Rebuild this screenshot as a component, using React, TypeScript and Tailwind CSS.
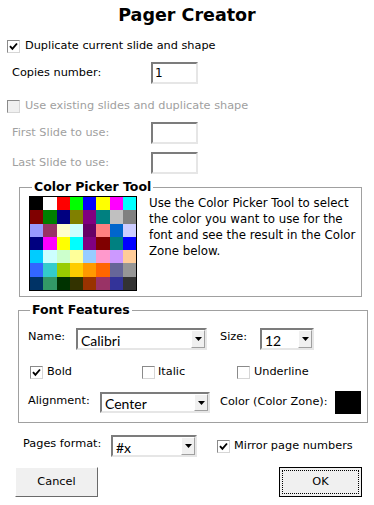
import React from "react";

const PALETTE = [
  ["#000000", "#ffffff", "#ff0000", "#00ff00", "#0000ff", "#ffff00", "#ff00ff", "#00ffff"],
  ["#800000", "#008000", "#000080", "#808000", "#800080", "#008080", "#c0c0c0", "#808080"],
  ["#9999ff", "#993366", "#ffffcc", "#ccffff", "#660066", "#ff8080", "#0066cc", "#ccccff"],
  ["#000080", "#ff00ff", "#ffff00", "#00ffff", "#800080", "#800000", "#008080", "#0000ff"],
  ["#00ccff", "#ccffff", "#ccffcc", "#ffff99", "#99ccff", "#ff99cc", "#cc99ff", "#ffcc99"],
  ["#3366ff", "#33cccc", "#99cc00", "#ffcc00", "#ff9900", "#ff6600", "#666699", "#969696"],
  ["#003366", "#339966", "#003300", "#333300", "#993300", "#993366", "#333399", "#333333"],
];

function Check({ checked, disabled }: { checked?: boolean; disabled?: boolean }) {
  return (
    <div
      className={
        "w-[13px] h-[13px] shrink-0 border border-t-[#8a8a8a] border-l-[#8a8a8a] border-r-[#d6d6d6] border-b-[#d6d6d6] flex items-center justify-center " +
        (disabled ? "bg-[#f0f0f0]" : "bg-white")
      }
    >
      {checked && (
        <svg width="9" height="9" viewBox="0 0 9 9">
          <path d="M1 4.2 L3.4 6.8 L8 1.5" fill="none" stroke="#000" strokeWidth="1.9" />
        </svg>
      )}
    </div>
  );
}

function TextBox({ value, w }: { value?: string; w: number }) {
  return (
    <div
      className="h-[22px] border-2 border-t-[#7c7c7c] border-l-[#7c7c7c] border-r-[#e6e6e6] border-b-[#e6e6e6] bg-white flex items-center pl-[2px] text-[12px] text-black font-['DejaVu_Sans',sans-serif]"
      style={{ width: w }}
    >
      {value}
    </div>
  );
}

function Combo({ value, w, h = 22 }: { value: string; w: number; h?: number }) {
  return (
    <div
      className="border-2 border-t-[#7c7c7c] border-l-[#7c7c7c] border-r-[#e6e6e6] border-b-[#e6e6e6] bg-white flex items-stretch"
      style={{ width: w, height: h }}
    >
      <div className="flex-1 flex items-center pl-[3px] pt-[2px] text-[14px] text-black font-['Lato',sans-serif]">
        {value}
      </div>
      <div className="w-[14px] bg-[#f0f0f0] border border-t-[#ffffff] border-l-[#ffffff] border-r-[#a0a0a0] border-b-[#a0a0a0] flex items-center justify-center">
        <svg width="7" height="4" viewBox="0 0 7 4">
          <path d="M0 0 H7 L3.5 4 Z" fill="#000" />
        </svg>
      </div>
    </div>
  );
}

export default function App() {
  return (
    <div className="w-[374px] h-[505px] bg-white text-black font-['DejaVu_Sans',sans-serif] text-[11.3px] flex flex-col overflow-hidden">
      <div className="h-[30px] flex items-center justify-center font-bold text-[17.5px] pt-[1px]">
        Pager Creator
      </div>

      <div className="mt-[10px] h-[13px] pl-[7px] flex items-center gap-[5px]">
        <Check checked />
        <span>Duplicate current slide and shape</span>
      </div>

      <div className="mt-[9px] h-[22px] pl-[12px] flex items-center">
        <span className="w-[139px]">Copies number:</span>
        <TextBox value="1" w={47} />
      </div>

      <div className="mt-[16px] h-[13px] pl-[7px] flex items-center gap-[5px] text-[#a0a0a0]">
        <Check disabled />
        <span>Use existing slides and duplicate shape</span>
      </div>

      <div className="mt-[9px] h-[22px] pl-[12px] flex items-center text-[#a0a0a0]">
        <span className="w-[139px]">First Slide to use:</span>
        <TextBox w={47} />
      </div>

      <div className="mt-[8px] h-[22px] pl-[12px] flex items-center text-[#a0a0a0]">
        <span className="w-[139px]">Last Slide to use:</span>
        <TextBox w={47} />
      </div>

      <div className="relative mt-[13px] ml-[19px] w-[343px] h-[110px] border border-[#a0a0a0] pt-[8px] pl-[9px] flex items-start gap-[12px]">
        <div className="absolute left-[12px] top-[-9px] bg-white px-[2px] font-bold text-[12.5px] leading-[16px]">
          Color Picker Tool
        </div>
        <div className="w-[108px] h-[95px] border border-black grid grid-cols-8 grid-rows-7 shrink-0">
          {PALETTE.flat().map((c, i) => (
            <div key={i} style={{ backgroundColor: c }} />
          ))}
        </div>
        <div className="-mt-[1px] leading-[16px] whitespace-nowrap text-[11.8px]">
          Use the Color Picker Tool to select
          <br />
          the color you want to use for the
          <br />
          font and see the result in the Color
          <br />
          Zone below.
        </div>
      </div>

      <div className="relative mt-[13px] ml-[18px] w-[350px] h-[113px] border border-[#a0a0a0] pt-[17px] pl-[9px] flex flex-col">
        <div className="absolute left-[11px] top-[-9px] bg-white px-[2px] font-bold text-[12.5px] leading-[16px]">
          Font Features
        </div>
        <div className="h-[22px] flex items-center">
          <span className="w-[48px] -mt-[4px]">Name:</span>
          <Combo value="Calibri" w={131} />
          <span className="ml-[13px] w-[40px] -mt-[4px]">Size:</span>
          <Combo value="12" w={54} />
        </div>
        <div className="mt-[16px] h-[13px] flex items-center">
          <div className="pl-[2px] w-[114px] flex items-center gap-[4px]">
            <Check checked />
            <span>Bold</span>
          </div>
          <div className="w-[95px] flex items-center gap-[3px]">
            <Check />
            <span>Italic</span>
          </div>
          <div className="flex items-center gap-[4px]">
            <Check />
            <span>Underline</span>
          </div>
        </div>
        <div className="mt-[12px] h-[23px] flex items-center">
          <span className="w-[72px] -mt-[3px]">Alignment:</span>
          <Combo value="Center" w={110} h={21} />
          <span className="ml-[10px] w-[115px]">Color (Color Zone):</span>
          <div className="w-[26px] h-[23px] bg-black" />
        </div>
      </div>

      <div className="mt-[12px] h-[22px] pl-[23px] flex items-center">
        <span className="w-[88px] -mt-[3px]">Pages format:</span>
        <Combo value="#x" w={86} />
        <div className="ml-[20px] flex items-center gap-[4px]">
          <Check checked />
          <span>Mirror page numbers</span>
        </div>
      </div>

      <div className="mt-[10px] h-[30px] px-[15px] flex items-center justify-between">
        <div className="w-[83px] h-[30px] bg-[#f0f0f0] border border-t-white border-l-white border-r-[#6a6a6a] border-b-[#6a6a6a] flex items-center justify-center">
          Cancel
        </div>
        <div className="w-[83px] h-[30px] mr-[-3px] bg-[#f0f0f0] border border-black p-[2px]">
          <div className="w-full h-full border border-dotted border-black flex items-center justify-center">
            OK
          </div>
        </div>
      </div>
    </div>
  );
}
